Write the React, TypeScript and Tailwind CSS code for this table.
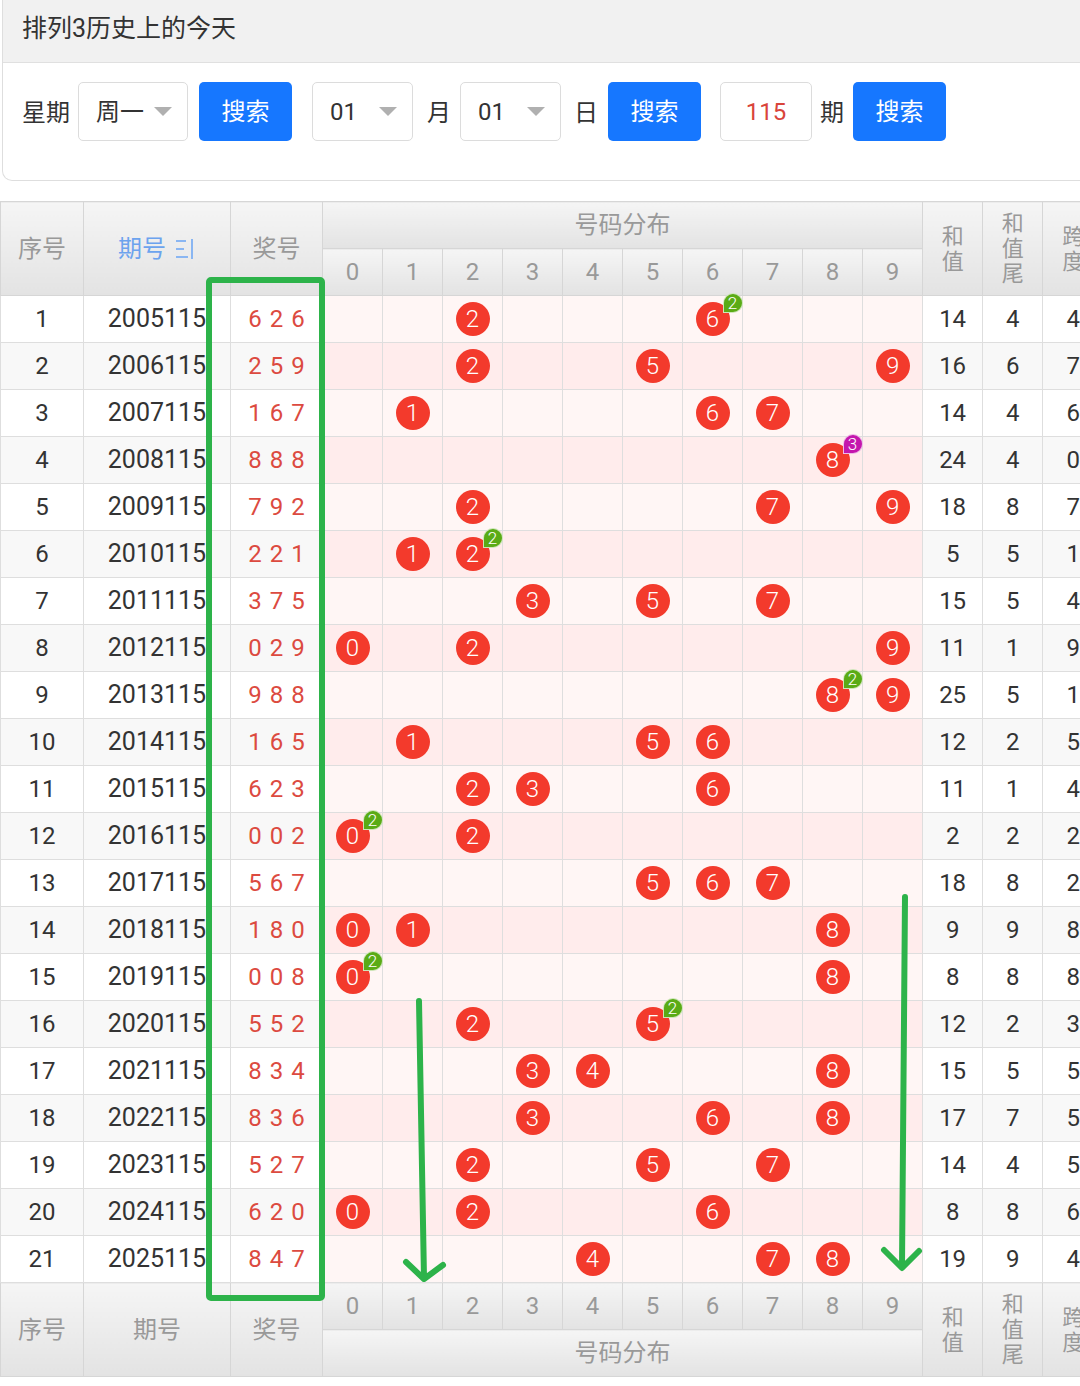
import React from 'react';

const draws: [string, string][] = [
    ['2005115', '626'], ['2006115', '259'], ['2007115', '167'], ['2008115', '888'],
    ['2009115', '792'], ['2010115', '221'], ['2011115', '375'], ['2012115', '029'],
    ['2013115', '988'], ['2014115', '165'], ['2015115', '623'], ['2016115', '002'],
    ['2017115', '567'], ['2018115', '180'], ['2019115', '008'], ['2020115', '552'],
    ['2021115', '834'], ['2022115', '836'], ['2023115', '527'], ['2024115', '620'],
    ['2025115', '847'],
];

const digits = [0, 1, 2, 3, 4, 5, 6, 7, 8, 9];

const hd = 'border border-[#d6d6d6] bg-gradient-to-b from-[#f5f5f5] to-[#e3e3e3] text-[#999] font-normal';

function Select({ value, width }: { value: string; width: string }) {
    return (
        <div className={`flex h-[59px] ${width} items-center justify-between rounded-[5px] border border-[#dcdcdc] bg-white pl-[17px] pr-[15px] text-[24px] text-[#333]`}>
            <span>{value}</span>
            <span className="h-0 w-0 border-x-[9px] border-t-[9px] border-x-transparent border-t-[#b0b0b0]" />
        </div>
    );
}

function Btn() {
    return (
        <button className="flex h-[59px] w-[93px] items-center justify-center rounded-[5px] bg-[#1677ff] text-[24px] text-white">
            搜索
        </button>
    );
}

function Vertical({ text }: { text: string }) {
    return <div className="mx-auto w-[22px] text-[22px] leading-[25px] break-all">{text}</div>;
}

function Ball({ d, count }: { d: number; count: number }) {
    return (
        <div className="relative flex h-[34px] w-[34px] items-center justify-center rounded-full bg-[#f33a2c] text-[24px] font-light leading-none text-white">
            {d}
            {count > 1 && (
                <span
                    className={`absolute left-[27px] top-[-9px] flex h-[20px] w-[20px] items-center justify-center rounded-full rounded-bl-none border border-white/70 text-[17px] font-light leading-none text-white ${count === 3 ? 'bg-[#c416ad]' : 'bg-[#5aab16]'}`}
                >
                    {count}
                </span>
            )}
        </div>
    );
}

export default function App() {
    return (
        <div className="relative h-[1386px] w-[1080px] overflow-hidden bg-white font-[Roboto,'Noto_Sans_CJK_SC',sans-serif] text-[#333]">
            <div className="ml-[2px] w-[1100px] overflow-hidden rounded-b-[10px] border border-t-0 border-[#dedede]">
                <div className="flex h-[63px] items-start border-b border-[#e0e0e0] bg-[#f1f1f1] pl-[19px] pt-[10px] text-[25px] text-[#333]">
                    排列3历史上的今天
                </div>
                <div className="flex h-[117px] items-start pl-[19px] pt-[19px] text-[24px]">
                    <span className="mt-[13px]">星期</span>
                    <div className="ml-[8px]"><Select value="周一" width="w-[110px]" /></div>
                    <div className="ml-[11px]"><Btn /></div>
                    <div className="ml-[20px]"><Select value="01" width="w-[101px]" /></div>
                    <span className="ml-[14px] mt-[13px]">月</span>
                    <div className="ml-[9px]"><Select value="01" width="w-[101px]" /></div>
                    <span className="ml-[13px] mt-[13px]">日</span>
                    <div className="ml-[10px]"><Btn /></div>
                    <div className="ml-[19px] flex h-[59px] w-[92px] items-center justify-center rounded-[5px] border border-[#dcdcdc] text-[24px] text-[#d9443a]">
                        115
                    </div>
                    <span className="ml-[8px] mt-[13px]">期</span>
                    <div className="ml-[9px]"><Btn /></div>
                </div>
            </div>

            <table className="mt-[20px] w-[1103px] table-fixed border-collapse text-center">
                <colgroup>
                    <col className="w-[83px]" />
                    <col className="w-[147px]" />
                    <col className="w-[92px]" />
                    {digits.map((d) => (
                        <col key={d} className="w-[60px]" />
                    ))}
                    <col className="w-[60px]" />
                    <col className="w-[60px]" />
                    <col className="w-[61px]" />
                </colgroup>
                <thead>
                    <tr className="h-[47px]">
                        <th rowSpan={2} className={`${hd} text-[24px]`}>序号</th>
                        <th rowSpan={2} className={`${hd} text-[24px]`}>
                            <span className="inline-flex items-center gap-[8px] text-[#6ca3ee]">
                                期号
                                <svg width="22" height="24" viewBox="0 0 22 24" fill="none" stroke="#8ab6f2" strokeWidth="2">
                                    <path d="M2 4h10M2 12h8M2 20h12M18 2v20" />
                                </svg>
                            </span>
                        </th>
                        <th rowSpan={2} className={`${hd} text-[24px]`}>奖号</th>
                        <th colSpan={10} className={`${hd} text-[24px]`}>号码分布</th>
                        <th rowSpan={2} className={hd}><Vertical text="和值" /></th>
                        <th rowSpan={2} className={hd}><Vertical text="和值尾" /></th>
                        <th rowSpan={2} className={hd}><Vertical text="跨度" /></th>
                    </tr>
                    <tr className="h-[47px]">
                        {digits.map((d) => (
                            <th key={d} className={`${hd} text-[24px] font-light`}>{d}</th>
                        ))}
                    </tr>
                </thead>
                <tbody>
                    {draws.map(([issue, num], i) => {
                        const ns = num.split('').map(Number);
                        const sum = ns[0] + ns[1] + ns[2];
                        const span = Math.max(...ns) - Math.min(...ns);
                        const even = i % 2 === 1;
                        const plain = even ? 'bg-[#f8f8f8]' : 'bg-white';
                        const pink = even ? 'bg-[#ffecec]' : 'bg-[#fff6f5]';
                        const cell = 'border border-[#dedede]';
                        return (
                            <tr key={issue} className="h-[47px] text-[24px]">
                                <td className={`${cell} ${plain}`}>{i + 1}</td>
                                <td className={`${cell} ${plain} text-[25px]`}>{issue}</td>
                                <td className={`${cell} ${plain} tracking-[8px] text-[#dc4a40]`}>
                                    <span className="ml-[8px]">{ns.join('')}</span>
                                </td>
                                {digits.map((d) => {
                                    const count = ns.filter((n) => n === d).length;
                                    return (
                                        <td key={d} className={`${cell} ${pink} p-0`}>
                                            {count > 0 && (
                                                <div className="flex items-center justify-center">
                                                    <Ball d={d} count={count} />
                                                </div>
                                            )}
                                        </td>
                                    );
                                })}
                                <td className={`${cell} ${plain}`}>{sum}</td>
                                <td className={`${cell} ${plain}`}>{sum % 10}</td>
                                <td className={`${cell} ${plain}`}>{span}</td>
                            </tr>
                        );
                    })}
                </tbody>
                <tfoot>
                    <tr className="h-[47px]">
                        <th rowSpan={2} className={`${hd} text-[24px]`}>序号</th>
                        <th rowSpan={2} className={`${hd} text-[24px]`}>期号</th>
                        <th rowSpan={2} className={`${hd} text-[24px]`}>奖号</th>
                        {digits.map((d) => (
                            <th key={d} className={`${hd} text-[24px] font-light`}>{d}</th>
                        ))}
                        <th rowSpan={2} className={hd}><Vertical text="和值" /></th>
                        <th rowSpan={2} className={hd}><Vertical text="和值尾" /></th>
                        <th rowSpan={2} className={hd}><Vertical text="跨度" /></th>
                    </tr>
                    <tr className="h-[47px]">
                        <th colSpan={10} className={`${hd} text-[24px]`}>号码分布</th>
                    </tr>
                </tfoot>
            </table>

            <svg
                className="pointer-events-none absolute left-0 top-0"
                width="1080"
                height="1386"
                viewBox="0 0 1080 1386"
                fill="none"
                stroke="#2db34a"
                strokeWidth="6"
                strokeLinecap="round"
                strokeLinejoin="round"
            >
                <rect x="209" y="280" width="113" height="1018" rx="2" />
                <path d="M419 1001L424 1278M406 1262L424 1279L443 1265" />
                <path d="M905 897L902 1266M884 1250L902 1268L919 1251" />
            </svg>
        </div>
    );
}
